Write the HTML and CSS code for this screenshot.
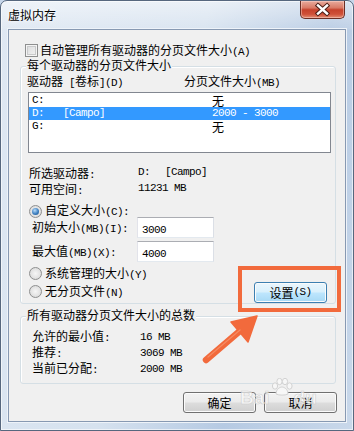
FILE: index.html
```html
<!DOCTYPE html>
<html lang="zh-CN">
<head>
<meta charset="utf-8">
<title>虚拟内存</title>
<link rel="stylesheet" href="styles.css">
</head>
<body>
<div class="window">
  <div class="titlebar">
    <span class="title">虚拟内存</span>
    <div class="close">
      <svg width="43" height="17" viewBox="0 0 43 17">
        <path d="M17 4.5 L26 12.5 M26 4.5 L17 12.5" stroke="#4a1c14" stroke-width="4.4" stroke-linecap="square" fill="none"/>
        <path d="M17 4.5 L26 12.5 M26 4.5 L17 12.5" stroke="#ffffff" stroke-width="2.4" stroke-linecap="square" fill="none"/>
      </svg>
    </div>
  </div>
  <div class="client">
    <div class="check-row">
      <span class="checkbox"></span>
      <span>自动管理所有驱动器的分页文件大小<span class="a">(A)</span></span>
    </div>

    <div class="group g1">
      <div class="group-title">每个驱动器的分页文件大小</div>
      <div class="col-head">
        <span class="col-drive">驱动器<span class="a"> [</span>卷标<span class="a">](D)</span></span>
        <span>分页文件大小<span class="a">(MB)</span></span>
      </div>
      <div class="list">
        <div class="row"><span class="a">C:</span><span></span><span>无</span></div>
        <div class="row sel"><span class="a">D:</span><span class="a">[Campo]</span><span class="a">2000 - 3000</span></div>
        <div class="row"><span class="a">G:</span><span></span><span>无</span></div>
      </div>
      <div class="info">
        <span>所选驱动器<span class="a">:</span></span>
        <span class="val"><span class="a">D:</span><span class="a vol">[Campo]</span></span>
        <span>可用空间<span class="a">:</span></span>
        <span class="a">11231 MB</span>
      </div>
      <div class="radio-row custom"><span class="radio on"></span><span>自定义大小<span class="a">(C):</span></span></div>
      <div class="field-row">
        <span class="field-label">初始大小<span class="a">(MB)(I):</span></span>
        <div class="textbox"><span class="a">3000</span></div>
      </div>
      <div class="field-row second">
        <span class="field-label">最大值<span class="a">(MB)(X):</span></span>
        <div class="textbox"><span class="a">4000</span></div>
      </div>
      <div class="bottom-row">
        <div class="radios">
          <div class="radio-row"><span class="radio"></span><span>系统管理的大小<span class="a">(Y)</span></span></div>
          <div class="radio-row"><span class="radio"></span><span>无分页文件<span class="a">(N)</span></span></div>
        </div>
        <div class="btn hot">设置<span class="a">(S)</span></div>
      </div>
    </div>

    <div class="group g2">
      <div class="group-title">所有驱动器分页文件大小的总数</div>
      <div class="totals">
        <span>允许的最小值<span class="a">:</span></span><span class="a">16 MB</span>
        <span>推荐<span class="a">:</span></span><span class="a">3069 MB</span>
        <span>当前已分配<span class="a">:</span></span><span class="a">2000 MB</span>
      </div>
    </div>

    <div class="buttons">
      <div class="btn">确定</div>
      <div class="btn">取消</div>
    </div>
  </div>
</div>

<div class="watermark"><span class="wm-bai">Bai</span><svg class="paw" width="22" height="18" viewBox="0 0 22 18"><g fill="#f7f7f7" stroke="#d2d2d2" stroke-width="1"><ellipse cx="4" cy="8" rx="2.6" ry="3.2"/><ellipse cx="8.5" cy="3.5" rx="2.6" ry="3.2"/><ellipse cx="14" cy="3.5" rx="2.6" ry="3.2"/><ellipse cx="18.5" cy="8" rx="2.6" ry="3.2"/><path d="M5 16 C5 11 9 9 11 9 C13 9 17 11 17 16 C14 17.5 8 17.5 5 16 Z"/></g></svg><span class="wm-du">du</span></div>

<svg class="annot" width="354" height="431" viewBox="0 0 354 431">
  <rect x="240" y="268" width="99" height="42" fill="none" stroke="#f26a3c" stroke-width="4"/>
  <line x1="206" y1="360" x2="241" y2="330" stroke="#f26a3c" stroke-width="6.5" stroke-linecap="round"/>
  <polygon points="257,316 231,322 248,342" fill="#f26a3c" stroke="#f26a3c" stroke-width="1.5" stroke-linejoin="round"/>
  <line x1="208" y1="357" x2="240" y2="330" stroke="#f89a74" stroke-width="1.2" stroke-linecap="round" opacity="0.7"/>
</svg>
</body>
</html>
```
FILE: styles.css
```css
* { box-sizing: border-box; }
html, body { margin: 0; padding: 0; }
body {
  position: relative;
  width: 354px;
  height: 431px;
  overflow: hidden;
  font-family: "Noto Sans CJK SC", "Noto Sans", sans-serif;
  font-size: 12px;
  line-height: 13px;
  color: #000;
  background: #c6d6ea;
}
.a {
  font-family: "Liberation Mono", "DejaVu Sans Mono", monospace;
  font-size: 11px;
  letter-spacing: -0.6px;
}

/* window frame */
.window {
  width: 354px;
  height: 431px;
  border: 1px solid #56677e;
  border-radius: 7px 7px 0 0;
  background:
    linear-gradient(180deg, rgba(255,255,255,0.5) 0px, rgba(255,255,255,0.1) 28px, rgba(255,255,255,0) 29px),
    linear-gradient(105deg, #dfe8f3 0%, #d6e2ef 45%, #b6cae3 72%, #c9d8ea 100%);
  box-shadow: inset 0 0 0 1px rgba(255,255,255,0.6);
  display: flex;
  flex-direction: column;
}
.titlebar {
  height: 28px;
  flex: none;
  display: flex;
  justify-content: space-between;
  align-items: flex-start;
  padding: 0 8px 0 7px;
}
.title {
  margin-top: 7px;
  color: #000;
  text-shadow: 0 0 6px #fff, 0 0 3px #fff;
}
.close {
  width: 45px;
  height: 18px;
  border: 1px solid #6b2e25;
  border-top: none;
  border-radius: 0 0 5px 5px;
  background: linear-gradient(180deg, #e9ab9d 0%, #d97a66 40%, #c6412b 52%, #cf5139 78%, #e38e74 100%);
  box-shadow: inset 0 0 0 1px rgba(255,220,210,0.45);
  display: flex;
  align-items: center;
  justify-content: center;
}
.close svg { display: block; }

/* client area */
.client {
  margin-left: 7px;
  width: 338px;
  height: 393px;
  background: #f0f0f0;
  border: 1px solid #8799b2;
  box-shadow: 0 0 0 1px #eef3f9;
  display: flex;
  flex-direction: column;
}

.check-row {
  display: flex;
  align-items: center;
  gap: 2px;
  height: 13px;
  margin: 14px 0 0 16px;
  white-space: nowrap;
}
.checkbox {
  width: 13px;
  height: 13px;
  flex: none;
  border: 1px solid #8e8f8f;
  background: linear-gradient(135deg, #d9dadb, #f4f4f4);
  box-shadow: inset 0 0 0 1px #f4f4f4, inset 0 0 0 2px #c9cacb;
}

/* group boxes */
.group {
  margin-left: 11px;
  width: 316px;
  border: 1px solid #d5dfe5;
  border-radius: 3px;
  padding-left: 5px;
  display: flex;
  flex-direction: column;
  box-shadow: inset 1px 1px 0 #fff;
}
.g1 { margin-top: 9px; height: 238px; }
.g2 { margin-top: 12px; height: 68px; }
.group-title {
  margin-top: -9px;
  align-self: flex-start;
  padding: 0 1px;
  background: #f0f0f0;
  white-space: nowrap;
}

.col-head {
  margin: 3px 0 0 1px;
  display: flex;
  white-space: nowrap;
}
.col-drive { width: 157px; }

.list {
  margin: 2px 0 0 2px;
  width: 303px;
  height: 66px;
  border: 1px solid #828790;
  background: #fff;
  padding-top: 1px;
}
.row {
  display: grid;
  grid-template-columns: 31px 149px 1fr;
  height: 13px;
  padding-left: 3px;
  white-space: pre;
}
.row.sel { background: #3399ff; color: #fff; }

.info {
  margin: 13px 0 0 3px;
  display: grid;
  grid-template-columns: 109px 1fr;
  white-space: nowrap;
}
.val { display: flex; }
.vol { margin-left: 15px; }

.radio-row {
  display: flex;
  align-items: center;
  gap: 3px;
  height: 13px;
  margin-left: 3px;
  white-space: nowrap;
}
.radio-row.custom { margin-top: 7px; height: 12px; }
.radio {
  width: 13px;
  height: 13px;
  flex: none;
  border-radius: 50%;
  border: 1px solid #8e8f8f;
  background: radial-gradient(circle at 50% 50%, #f6f6f6 0%, #e2e2e2 60%, #cfcfcf 100%);
  display: flex;
  align-items: center;
  justify-content: center;
}
.radio.on::after {
  content: "";
  width: 7px;
  height: 7px;
  border-radius: 50%;
  background: radial-gradient(circle at 40% 35%, #b8dcfa 0%, #3d7fc0 55%, #1d4f86 100%);
}

.field-row {
  display: flex;
  align-items: center;
  height: 21px;
  margin-left: 6px;
  white-space: nowrap;
}
.field-row.second { margin-top: 3px; }
.field-label { width: 105px; }
.textbox {
  width: 77px;
  height: 21px;
  border: 1px solid #abadb3;
  border-left-color: #e2e3ea;
  border-right-color: #dbdfe6;
  border-bottom-color: #e3e9ef;
  background: #fff;
  padding-left: 4px;
  line-height: 19px;
}

.bottom-row {
  margin-top: 5px;
  display: flex;
  justify-content: space-between;
  align-items: flex-start;
  padding-right: 8px;
}
.radios {
  display: flex;
  flex-direction: column;
  gap: 5px;
}
.bottom-row .btn { margin-top: 15px; }

.totals {
  margin: 8px 0 0 6px;
  display: grid;
  grid-template-columns: 108px 1fr;
  grid-auto-rows: 16px;
  align-items: center;
  white-space: nowrap;
}

/* buttons */
.btn {
  width: 73px;
  height: 21px;
  border: 1px solid #707070;
  border-radius: 3px;
  background: linear-gradient(180deg, #f2f2f2 0%, #ebebeb 48%, #dddddd 52%, #cfcfcf 100%);
  box-shadow: inset 0 0 0 1px #fbfbfb;
  display: flex;
  align-items: center;
  justify-content: center;
  white-space: nowrap;
}
.btn.hot {
  border-color: #3c7fb1;
  background: linear-gradient(180deg, #eaf6fd 0%, #d9f0fc 48%, #bee6fd 52%, #a7d9f5 100%);
}
.buttons {
  margin-top: 8px;
  display: flex;
  justify-content: flex-end;
  gap: 8px;
  padding-right: 8px;
}

/* overlays */
.watermark {
  position: absolute;
  left: 240px;
  top: 378px;
  display: flex;
  align-items: flex-start;
  pointer-events: none;
  font-family: "Liberation Sans", sans-serif;
  font-weight: bold;
  font-size: 19px;
  line-height: 20px;
  color: rgba(250,250,250,0.7);
  -webkit-text-stroke: 0.6px rgba(195,195,195,0.75);
}
.wm-bai { margin-top: 10px; }
.paw { margin: 0 1px; }
.wm-du { margin-top: 10px; }
.annot {
  position: absolute;
  left: 0;
  top: 0;
  pointer-events: none;
}
```
